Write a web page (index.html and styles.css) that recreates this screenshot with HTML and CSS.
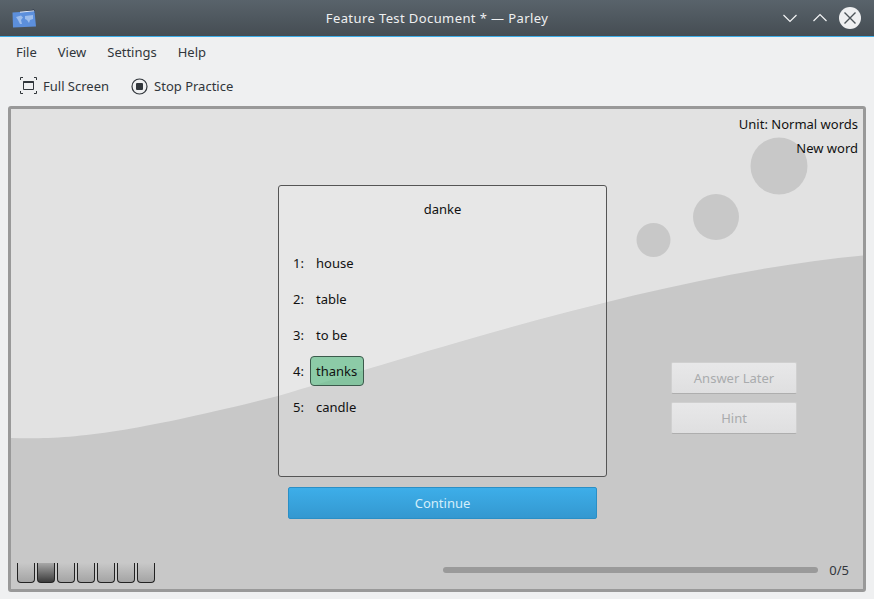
FILE: index.html
```html
<!DOCTYPE html>
<html lang="en">
  <head>
    <meta charset="UTF-8" />
    <title>Feature Test Document * — Parley</title>
    <link rel="stylesheet" href="styles.css">
  </head>
  <body>
    <div class="window">
      <header class="titlebar">
        <svg class="app-icon" width="24" height="19" viewBox="0 0 24 19">
          <path d="M8 3 L22 0.500 L23 4 L8 5 Z" fill="#1b2440" />
          <path d="M0.500 3.500 L22.500 2 L24 17.500 L1 18.500 Z" fill="#5c8fdc" />
          <path d="M8 3.200 L22 1.800" stroke="#dfe6f2" stroke-width="1" fill="none" />
          <path d="M4 8 L9 6.500 L11 8.500 L9 11 L10 15 L8 15 L6 11 Z M13 7 L21 6 L21 10 L18 11 L17 14 L15 11 L13 10 Z" fill="#9dbdec" />
        </svg>
        <div class="title">Feature Test Document * — Parley</div>
        <div class="win-buttons">
          <svg width="16" height="16" viewBox="0 0 16 16"><path d="M1.500 5 L8 11.500 L14.500 5" stroke="#f4f5f6" stroke-width="1.2" fill="none" /></svg>
          <svg width="16" height="16" viewBox="0 0 16 16"><path d="M1.500 11 L8 4.500 L14.500 11" stroke="#f4f5f6" stroke-width="1.2" fill="none" /></svg>
          <svg class="win-close" width="22" height="22" viewBox="0 0 22 22">
            <circle cx="11" cy="11" r="11" fill="#eff0f1" />
            <path d="M5.500 5.500 L16.500 16.500 M16.500 5.500 L5.500 16.500" stroke="#4d5459" stroke-width="1.4" />
          </svg>
        </div>
      </header>

      <nav class="menubar">
        <span>File</span>
        <span>View</span>
        <span>Settings</span>
        <span>Help</span>
      </nav>

      <div class="toolbar">
        <div class="tool">
          <svg width="18" height="18" viewBox="0 0 18 18" fill="none" stroke="#31363b">
            <path d="M0.500 3 V0.500 H3 M14 0.500 H16.500 V3 M16.500 14 V16.500 H14 M3 16.500 H0.500 V14" />
            <path d="M3.500 4.500 H13.500 V12.500 H3.500 Z" />
            <path d="M3.500 5 H13.500" stroke-width="2" />
          </svg>
          <span>Full Screen</span>
        </div>
        <div class="tool tool-stop">
          <svg width="17" height="17" viewBox="0 0 17 17">
            <circle cx="8.500" cy="8.500" r="7.500" fill="none" stroke="#31363b" stroke-width="1.2" />
            <rect x="5" y="5" width="7" height="7" rx="1" fill="#31363b" />
          </svg>
          <span>Stop Practice</span>
        </div>
      </div>

      <main class="stage">
        <svg class="stage-bg" width="852" height="480" viewBox="0 0 852 480">
          <rect width="852" height="480" fill="#e2e2e2" />
          <path d="M0 329 C 60 331 120 324 267 287 C 400 248 650 165 852 146.500 V480 H0 Z" fill="#c8c8c8" />
          <circle cx="768" cy="57" r="28.500" fill="#c8c8c8" />
          <circle cx="705" cy="108" r="23" fill="#c8c8c8" />
          <circle cx="642.500" cy="131" r="17" fill="#c8c8c8" />
        </svg>

        <div class="status">
          <div>Unit: Normal words</div>
          <div>New word</div>
        </div>

        <div class="middle">
          <div class="question-col">
            <section class="card">
              <div class="word">danke</div>
              <ol class="choices">
                <li><span class="num">1:</span><span class="choice">house</span></li>
                <li><span class="num">2:</span><span class="choice">table</span></li>
                <li><span class="num">3:</span><span class="choice">to be</span></li>
                <li><span class="num">4:</span><span class="choice picked">thanks</span></li>
                <li><span class="num">5:</span><span class="choice">candle</span></li>
              </ol>
            </section>
            <button class="continue">Continue</button>
          </div>
          <div class="side-buttons">
            <button class="side-btn" disabled>Answer Later</button>
            <button class="side-btn" disabled>Hint</button>
          </div>
        </div>

        <div class="bottom">
          <div class="boxes">
            <i></i><i class="dark"></i><i></i><i></i><i></i><i></i><i></i>
          </div>
          <div class="progress"></div>
          <span class="count">0/5</span>
        </div>
      </main>
    </div>
  </body>
</html>
```

FILE: styles.css
```css
html,
body {
  margin: 0;
  padding: 0;
}
body {
  font-family: "Noto Sans", sans-serif;
  font-size: 13px;
  color: #31363b;
  background: #eff0f1;
}
.window {
  width: 874px;
  height: 599px;
  display: flex;
  flex-direction: column;
  overflow: hidden;
}
.titlebar {
  height: 36px;
  border-bottom: 1px solid #3daee9;
  background: linear-gradient(#59636b, #454d53);
  display: flex;
  align-items: center;
  position: relative;
  padding: 0 13px 0 12px;
  color: #eff0f1;
}
.title {
  position: absolute;
  left: 0;
  right: 0;
  text-align: center;
  letter-spacing: 0.4px;
}
.win-buttons {
  margin-left: auto;
  display: flex;
  align-items: center;
  gap: 14px;
  position: relative;
}
.win-close {
  margin-left: -3px;
}
.menubar {
  box-sizing: border-box;
  height: 31px;
  padding: 0 0 2px 16px;
  display: flex;
  align-items: center;
  gap: 21px;
}
.toolbar {
  box-sizing: border-box;
  height: 38px;
  padding: 0 0 2px 20px;
  display: flex;
  align-items: center;
  gap: 22px;
}
.tool {
  display: flex;
  align-items: center;
  gap: 5px;
}
.tool-stop {
  gap: 6px;
}
.stage {
  position: relative;
  margin: 0 8px;
  width: 852px;
  height: 480px;
  border: 3px solid #999;
  border-radius: 3px;
  color: #111;
  overflow: hidden;
  flex: none;
}
.stage-bg {
  position: absolute;
  left: 0;
  top: 0;
}
.status {
  position: relative;
  height: 76px;
  padding: 3px 5px 0 0;
  box-sizing: border-box;
  text-align: right;
  line-height: 24px;
}
.middle {
  position: relative;
  display: flex;
  padding-left: 267px;
}
.question-col {
  display: flex;
  flex-direction: column;
  align-items: center;
  gap: 10px;
}
.card {
  box-sizing: border-box;
  width: 329px;
  height: 292px;
  border: 1px solid #555;
  border-radius: 3px;
  background: rgba(255, 255, 255, 0.2);
  padding: 13px 0 0 14px;
}
.word {
  text-align: center;
  padding-right: 14px;
  line-height: 20px;
}
.choices {
  list-style: none;
  margin: 26px 0 0;
  padding: 0;
}
.choices li {
  display: flex;
  align-items: center;
  height: 36px;
}
.num {
  width: 17px;
}
.choice {
  box-sizing: border-box;
  height: 30px;
  line-height: 28px;
  padding: 0 6px 0 5px;
  border: 1px solid transparent;
  border-radius: 4px;
}
.choice.picked {
  border-color: #3c5a4c;
  background: rgba(80, 185, 125, 0.6);
}
.continue {
  box-sizing: border-box;
  width: 309px;
  height: 32px;
  border: 1px solid #2a8fc6;
  border-radius: 2px;
  background: linear-gradient(#3daee9, #3498d0);
  color: #d4eefb;
  font: inherit;
}
.side-buttons {
  display: flex;
  flex-direction: column;
  gap: 8px;
  margin: 177px 0 0 64px;
}
.side-btn {
  box-sizing: border-box;
  width: 126px;
  height: 32px;
  border: 1px solid #d0d0d0;
  border-bottom-color: #aeaeae;
  border-radius: 2px;
  background: linear-gradient(#e8e8e9, #dfdfe0);
  color: #a9abad;
  font: inherit;
}
.bottom {
  position: absolute;
  left: 6px;
  right: 14px;
  bottom: 6px;
  display: flex;
  align-items: center;
}
.boxes {
  display: flex;
  gap: 2px;
}
.boxes i {
  box-sizing: border-box;
  display: block;
  width: 18px;
  height: 20px;
  border: 1px solid #222;
  border-top: none;
  border-radius: 0 0 4px 4px;
  background: linear-gradient(#c8c8c8, #a4a4a4);
}
.boxes i.dark {
  background: linear-gradient(#a8a8a8, #3c3c3c);
}
.progress {
  width: 375px;
  height: 6px;
  margin: 0 0 6px 288px;
  border-radius: 3px;
  background: #9a9a9a;
}
.count {
  margin: 0 0 6px auto;
  line-height: 14px;
  color: #31363b;
}
```
